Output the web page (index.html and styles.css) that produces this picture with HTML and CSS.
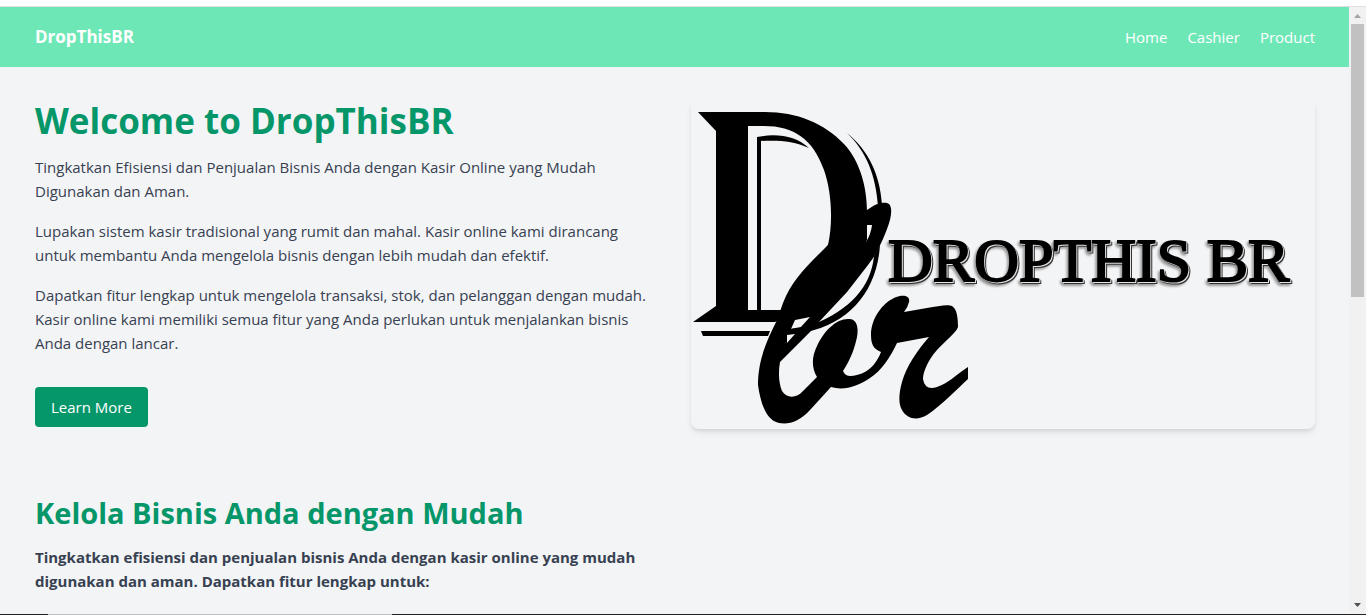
FILE: index.html
```html
<!DOCTYPE html>
<html lang="id">
<head>
<meta charset="utf-8">
<meta name="viewport" content="width=device-width, initial-scale=1">
<title>DropThisBR</title>
<link rel="stylesheet" href="styles.css">
</head>
<body>
<div class="window">
  <div class="window-top"></div>
  <div class="viewport">
    <div class="page">
      <header class="navbar">
        <a class="brand" href="#">DropThisBR</a>
        <nav class="nav-links">
          <a href="#">Home</a>
          <a href="#">Cashier</a>
          <a href="#">Product</a>
        </nav>
      </header>
      <main class="content">
        <section class="row">
          <div class="copy">
            <h1>Welcome to DropThisBR</h1>
            <p>Tingkatkan Efisiensi dan Penjualan Bisnis Anda dengan Kasir Online yang Mudah<br>Digunakan dan Aman.</p>
            <p>Lupakan sistem kasir tradisional yang rumit dan mahal. Kasir online kami dirancang<br>untuk membantu Anda mengelola bisnis dengan lebih mudah dan efektif.</p>
            <p>Dapatkan fitur lengkap untuk mengelola transaksi, stok, dan pelanggan dengan mudah.<br>Kasir online kami memiliki semua fitur yang Anda perlukan untuk menjalankan bisnis<br>Anda dengan lancar.</p>
            <button class="button" type="button">Learn More</button>
          </div>
          <div class="logo-card">
            <svg class="logo" viewBox="691 99 624 330" role="img" aria-label="DropThis BR">
              <!-- capital D -->
              <path fill-rule="evenodd" d="M698 112H765C797 112 824 123 844 144C860 161 867 187 867 212V240L830 300L775 322H693L716 306V131ZM748 126V310H782L828 245C833 223 832 193 824 170C813 139 794 126 764 126Z"/>
              <path d="M757 310V137C777 133 796 136 809 148C794 141 778 140 761 141V310Z"/>
              <path d="M847 133C868 150 880 174 882 205L878 207C876 175 866 151 847 133Z"/>
              <path d="M701 331H770L768 336H703Z"/>
              <path d="M880 245C877 291 850 323 806 332L790 333V329L812 325C850 310 871 287 874 256Z"/>
              <!-- script letters -->
              <path fill-rule="evenodd" d="M828 245C840 231 852 218 867 210C876 203 885 201 889 204C893 208 891 219 887 229C880 247 875 256 868 265L847 292L818 323L810 332L780 362C778 373 779 384 782 391C787 399 797 398 803 391L817 377C811 367 812 356 817 346C824 331 836 319 848 319C856 318 859 326 857 337C855 347 851 359 843 371C845 376 849 377 857 375C871 372 878 360 881 352C874 349 871 345 871 335C871 317 885 299 900 296C907 295 910 298 909 302Q908 307 904 312L927 308C938 306 948 304 952 306C957 309 958 318 958 327C956 333 944 342 937 350C928 360 923 372 923 379Q925 391 937 387C947 384 956 375 968 367V379C958 388 941 406 927 415C917 421 907 419 902 410C898 403 899 393 902 382C907 365 917 351 929 337L897 343C890 358 881 371 870 378C858 386 844 391 831 387L810 410C800 421 789 425 779 423C767 420 761 406 758 385C758 356 770 335 777 320L783 303C792 280 805 268 828 245ZM867 225H872Q871 234 866 242ZM795 320L810 317L800 328L791 329ZM787 335L795 334L787 343Z"/>
              <!-- wordmark -->
              <text class="wordmark" x="888" y="281">DROPTHIS BR</text>
            </svg>
          </div>
        </section>
        <section class="row">
          <div class="copy">
            <h2>Kelola Bisnis Anda dengan Mudah</h2>
            <p class="lead">Tingkatkan efisiensi dan penjualan bisnis Anda dengan kasir online yang mudah<br>digunakan dan aman. Dapatkan fitur lengkap untuk:</p>
          </div>
        </section>
      </main>
    </div>
    <div class="scrollbar" aria-hidden="true">
      <svg class="arrow arrow-up" viewBox="0 0 17 17"><path d="M5 11L8.500 7L12 11Z"/></svg>
      <div class="thumb"></div>
      <svg class="arrow arrow-down" viewBox="0 0 17 17"><path d="M5 6L8.500 10L12 6Z"/></svg>
    </div>
  </div>
  <div class="window-bottom"></div>
</div>
</body>
</html>
```
FILE: styles.css
```css
* { box-sizing: border-box; }

body {
  margin: 0;
  font-family: "Segoe UI", "Open Sans", "Noto Sans", sans-serif;
  font-size: 15px;
  line-height: 24px;
  color: #374151;
  background: #f3f4f6;
}

a { color: inherit; text-decoration: none; }

.window {
  display: flex;
  flex-direction: column;
  height: 100vh;
  overflow: hidden;
}

.window-top {
  flex: none;
  height: 7px;
  background: #fff;
  border-bottom: 1px solid #e0e0e0;
}

.window-bottom {
  flex: none;
  height: 1px;
  background: linear-gradient(to right, #222 48px, #c0c0c0 48px, #c0c0c0 392px, #222 392px);
}

.viewport {
  flex: 1;
  min-height: 0;
  display: flex;
}

.page {
  flex: 1;
  min-width: 0;
  overflow: hidden;
}

.navbar {
  display: flex;
  align-items: center;
  justify-content: space-between;
  height: 60px;
  padding: 0 34px 0 35px;
  color: #fff;
  background: #6ee7b7;
}

.brand { font-size: 17px; line-height: 26px; font-weight: 700; }

.nav-links { display: flex; gap: 20px; }

.content {
  display: flex;
  flex-direction: column;
  gap: 64px;
  padding: 32px 34px 32px 35px;
}

.row {
  display: grid;
  grid-template-columns: 1fr 1fr;
  gap: 32px;
  align-items: center;
}

.copy { white-space: nowrap; }

h1, h2 {
  margin: 0;
  line-height: 40px;
  font-weight: 700;
  color: #059669;
}

h1 { margin-bottom: 14px; font-size: 35px; }
h2 { margin-bottom: 12px; font-size: 29px; }

p { margin: 0 0 16px; }

.lead { font-weight: 700; }

.button {
  display: block;
  margin-top: 32px;
  padding: 8px 16px;
  border: 0;
  border-radius: 4px;
  font: inherit;
  color: #fff;
  background: #059669;
}

.logo-card {
  border-radius: 8px;
  background: #f3f4f6;
  box-shadow: 0 4px 6px -1px rgba(0, 0, 0, 0.1), 0 2px 4px -1px rgba(0, 0, 0, 0.06);
}

.logo { display: block; width: 100%; height: auto; }

.wordmark {
  font-family: "Liberation Serif", serif;
  font-size: 62px;
  stroke: #000;
  stroke-width: 2px;
  filter:
    drop-shadow(1px 1px 0 #e4e4e4)
    drop-shadow(1px 1px 0 #333)
    drop-shadow(-2px 2px 1px #999);
}

.scrollbar {
  flex: none;
  display: flex;
  flex-direction: column;
  width: 17px;
  background: #f1f1f1;
}

.arrow { width: 17px; height: 17px; }
.arrow-up { fill: #a3a3a3; }
.arrow-down { margin-top: auto; fill: #505050; }

.thumb {
  height: 273px;
  margin: 0 2px;
  background: #c1c1c1;
}
```
